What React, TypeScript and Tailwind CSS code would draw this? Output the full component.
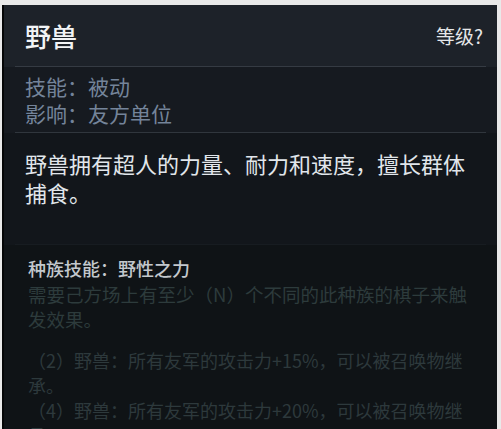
import React from "react";

const font = { fontFamily: '"Noto Sans CJK SC", "Noto Sans", sans-serif' };

const App = () => {
  const bonuses = [
    "（2）野兽：所有友军的攻击力+15%，可以被召唤物继承。",
    "（4）野兽：所有友军的攻击力+20%，可以被召唤物继承。",
  ];

  return (
    <div
      style={font}
      className="w-[501px] h-[429px] overflow-hidden bg-[#e9e9e9] pt-[5px] pl-[2px] pr-[4px]"
    >
      <div className="h-full border-l-2 border-[#050607] bg-[#12161b] flex flex-col">
        {/* Header */}
        <div className="bg-[#1d2229] px-[11px]">
          <div className="h-[62px] flex items-center justify-between pl-[10px] pr-[3px] border-b border-[#353b43]">
            <span className="text-[26px] font-medium text-[#f2f4f6] leading-none">野兽</span>
            <span className="text-[19px] text-[#e6e8ea] leading-none">等级?</span>
          </div>
        </div>

        {/* Type info */}
        <div className="bg-[#161a20] px-[11px]">
          <div className="h-[66px] flex flex-col justify-center pl-[10px] border-b border-[#30363d] text-[21px] leading-[27px] text-[#74849a]">
            <div>技能：被动</div>
            <div>影响：友方单位</div>
          </div>
        </div>

        {/* Description */}
        <div className="px-[11px]">
          <div className="pl-[10px] pt-[16px] pr-[20px] h-[112px] border-b border-[#171c21] text-[22px] leading-[29px] text-[#e1e6eb]">
            野兽拥有超人的力量、耐力和速度，擅长群体捕食。
          </div>
        </div>

        {/* Race skill */}
        <div className="pt-[12px] pl-[24px] pr-[2px] bg-[#0f1316] flex-1">
          <div className="text-[18px] leading-[22px] font-medium text-[#c3c8cd]">种族技能：野性之力</div>
          <div className="mt-[3px] w-[450px] text-[18.5px] leading-[25px] text-[#2d3b3c]">
            需要己方场上有至少（N）个不同的此种族的棋子来触发效果。
          </div>
          <div className="mt-[16px] w-[456px] text-[18px] leading-[25px] text-[#2d393c]">
            {bonuses.map((b) => (
              <div key={b}>{b}</div>
            ))}
          </div>
        </div>
      </div>
    </div>
  );
};

export default App;
